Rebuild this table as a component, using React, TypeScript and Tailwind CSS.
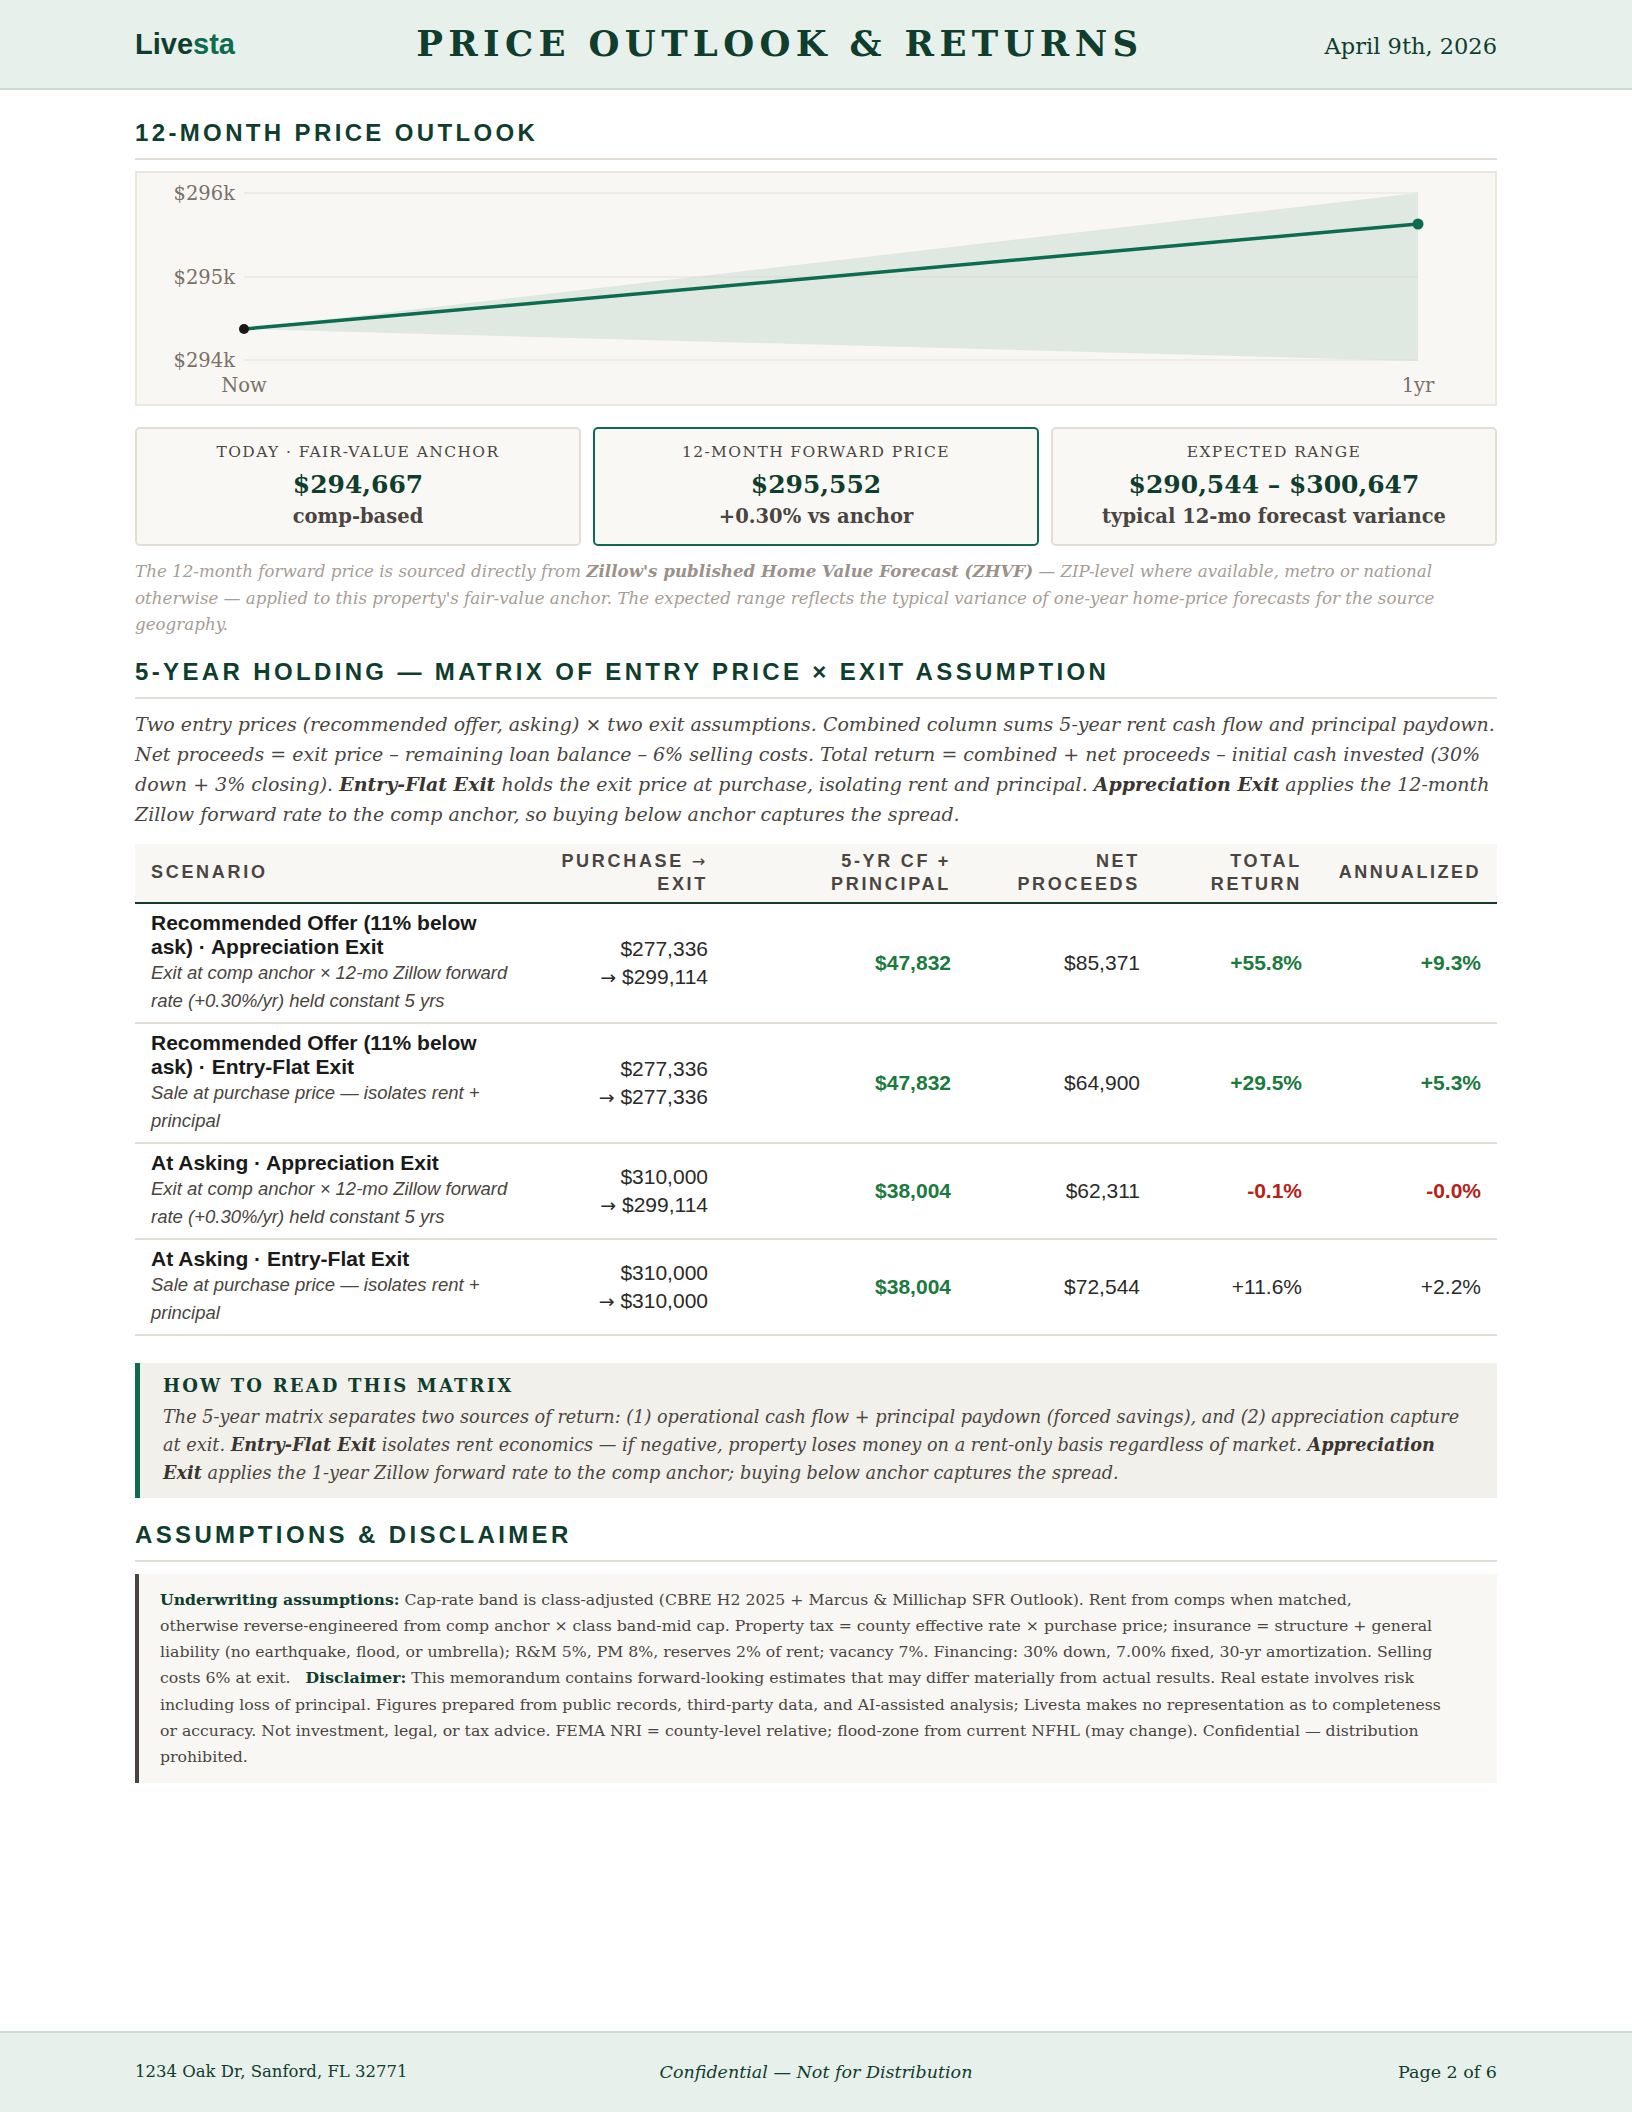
import React from "react";

const serif = "font-['DejaVu_Serif',serif]";
const sans = "font-['Liberation_Sans',Arial,sans-serif]";

type Row = {
  title: string;
  sub: string;
  buy: string;
  exit: string;
  cf: string;
  net: string;
  total: string;
  ann: string;
  tone: "green" | "red" | "plain";
};

const rows: Row[] = [
  {
    title: "Recommended Offer (11% below ask) · Appreciation Exit",
    sub: "Exit at comp anchor × 12-mo Zillow forward rate (+0.30%/yr) held constant 5 yrs",
    buy: "$277,336",
    exit: "$299,114",
    cf: "$47,832",
    net: "$85,371",
    total: "+55.8%",
    ann: "+9.3%",
    tone: "green",
  },
  {
    title: "Recommended Offer (11% below ask) · Entry-Flat Exit",
    sub: "Sale at purchase price — isolates rent + principal",
    buy: "$277,336",
    exit: "$277,336",
    cf: "$47,832",
    net: "$64,900",
    total: "+29.5%",
    ann: "+5.3%",
    tone: "green",
  },
  {
    title: "At Asking · Appreciation Exit",
    sub: "Exit at comp anchor × 12-mo Zillow forward rate (+0.30%/yr) held constant 5 yrs",
    buy: "$310,000",
    exit: "$299,114",
    cf: "$38,004",
    net: "$62,311",
    total: "-0.1%",
    ann: "-0.0%",
    tone: "red",
  },
  {
    title: "At Asking · Entry-Flat Exit",
    sub: "Sale at purchase price — isolates rent + principal",
    buy: "$310,000",
    exit: "$310,000",
    cf: "$38,004",
    net: "$72,544",
    total: "+11.6%",
    ann: "+2.2%",
    tone: "plain",
  },
];

function toneClass(t: Row["tone"]) {
  if (t === "green") return "font-bold text-[#1b7a3d]";
  if (t === "red") return "font-bold text-[#b42318]";
  return "text-[#2a2a2a]";
}

function Arrow() {
  return <span className="font-['DejaVu_Sans',sans-serif] font-normal text-[0.9em]">→</span>;
}

function SectionHeading({ children }: { children: React.ReactNode }) {
  return (
    <div className="border-b-2 border-[#e2ded5] pb-[11px]">
      <h2 className={`${sans} text-[24px] leading-[28px] font-bold tracking-[0.14em] text-[#0f3d2e]`}>
        {children}
      </h2>
    </div>
  );
}

function Chart() {
  const W = 1358;
  const H = 231;
  const x0 = 107;
  const x1 = 1281;
  const g = [20, 104, 187];
  return (
    <div className="border-2 border-[#ece8e0] bg-[#f8f7f3]">
      <svg width={W} height={H} viewBox={`0 0 ${W} ${H}`} className="block">
        <polygon points={`${x0},156 ${x1},20 ${x1},188`} fill="#dfe9e1" />
        {g.map((y) => (
          <line key={y} x1={x0} x2={x1} y1={y} y2={y} stroke="#d9d6cc" strokeOpacity="0.45" strokeWidth="1.5" />
        ))}
        <g fontFamily="'DejaVu Serif', serif" fontSize="19.5" fill="#7b7168">
          <text x="98" y={g[0] + 7} textAnchor="end">$296k</text>
          <text x="98" y={g[1] + 7} textAnchor="end">$295k</text>
          <text x="98" y={g[2] + 7} textAnchor="end">$294k</text>
          <text x={x0} y="219" textAnchor="middle">Now</text>
          <text x={x1} y="219" textAnchor="middle">1yr</text>
        </g>
        <line x1={x0} y1={156} x2={x1} y2={51} stroke="#0d6b4f" strokeWidth="3.5" />
        <circle cx={x0} cy={156} r="5" fill="#1a1614" />
        <circle cx={x1} cy={51} r="5.5" fill="#0d6b4f" />
      </svg>
    </div>
  );
}

function Card({
  label,
  value,
  sub,
  accent,
}: {
  label: string;
  value: string;
  sub: string;
  accent?: boolean;
}) {
  return (
    <div
      className={`h-[119px] rounded-[5px] border-2 ${
        accent ? "border-[#0d6b4f]" : "border-[#e2ded6]"
      } bg-[#f9f8f5] pt-[12px] flex flex-col items-center ${serif}`}
    >
      <div className="text-[15.5px] leading-[22px] tracking-[0.09em] text-[#4a4540]">{label}</div>
      <div className="mt-[6px] text-[25px] leading-[32px] font-bold text-[#0f3d2e]">{value}</div>
      <div className="mt-[3px] text-[19.5px] leading-[26px] font-bold text-[#4a4540]">{sub}</div>
    </div>
  );
}

export default function App() {
  return (
    <div className="min-h-[2112px] w-[1632px] bg-white flex flex-col">
      <header className="h-[90px] shrink-0 bg-[#e8f0eb] border-b-2 border-[#cddcd3] px-[135px] flex items-center justify-between">
        <div className={`${sans} text-[29px] font-bold leading-none`}>
          <span className="text-[#0f3d2e]">Live</span>
          <span className="text-[#0d6b4f]">sta</span>
        </div>
        <div className={`${serif} text-[35.5px] font-bold tracking-[0.15em] text-[#0f3d2e] leading-none`}>
          PRICE OUTLOOK &amp; RETURNS
        </div>
        <div className={`${serif} text-[22.5px] text-[#0f3d2e] leading-none pt-[4px]`}>April 9th, 2026</div>
      </header>

      <main className="px-[135px] pt-[29px] flex flex-col">
        <SectionHeading>12-MONTH PRICE OUTLOOK</SectionHeading>
        <div className="mt-[11px]">
          <Chart />
        </div>

        <div className="mt-[21px] grid grid-cols-3 gap-[12px]">
          <Card label="TODAY · FAIR-VALUE ANCHOR" value="$294,667" sub="comp-based" />
          <Card label="12-MONTH FORWARD PRICE" value="$295,552" sub="+0.30% vs anchor" accent />
          <Card label="EXPECTED RANGE" value="$290,544 – $300,647" sub="typical 12-mo forecast variance" />
        </div>

        <p className={`${serif} mt-[12px] italic text-[16.7px] leading-[26.5px] text-[#a69d95]`}>
          The 12-month forward price is sourced directly from{" "}
          <b className="text-[#9a918a]">Zillow's published Home Value Forecast (ZHVF)</b> — ZIP-level where
          available, metro or national otherwise — applied to this property's fair-value anchor. The expected range
          reflects the typical variance of one-year home-price forecasts for the source geography.
        </p>

        <div className="mt-[20px]">
          <SectionHeading>5-YEAR HOLDING — MATRIX OF ENTRY PRICE × EXIT ASSUMPTION</SectionHeading>
        </div>
        <p className={`${serif} mt-[10px] italic text-[19px] leading-[30px] text-[#4a4540]`}>
          Two entry prices (recommended offer, asking) × two exit assumptions. Combined column sums 5-year rent cash
          flow and principal paydown. Net proceeds = exit price – remaining loan balance – 6% selling costs. Total
          return = combined + net proceeds – initial cash invested (30% down + 3% closing).{" "}
          <b className="text-[#3a3530]">Entry-Flat Exit</b> holds the exit price at purchase, isolating rent and
          principal. <b className="text-[#3a3530]">Appreciation Exit</b> applies the 12-month Zillow forward rate to
          the comp anchor, so buying below anchor captures the spread.
        </p>

        <div className={`${sans} mt-[15px]`}>
          <div className="grid grid-cols-[400px_189px_243px_189px_162px_179px] bg-[#f8f7f3] border-b-2 border-[#143d2f] h-[60px] items-center text-[18px] leading-[23px] font-bold tracking-[0.15em] text-[#4a4540]">
            <div className="px-[16px]">SCENARIO</div>
            <div className="px-[16px] text-right">
              PURCHASE <Arrow /> EXIT
            </div>
            <div className="px-[16px] text-right">5-YR CF + PRINCIPAL</div>
            <div className="px-[16px] text-right">NET PROCEEDS</div>
            <div className="px-[16px] text-right">TOTAL RETURN</div>
            <div className="pl-[12px] pr-[16px] text-right tracking-[0.14em]">ANNUALIZED</div>
          </div>
          {rows.map((r, i) => (
            <div
              key={i}
              className="grid grid-cols-[400px_189px_243px_189px_162px_179px] border-b-2 border-[#e2ded5] py-[7px] text-[21px] text-[#2a2a2a]"
            >
              <div className="px-[16px]">
                <div className="font-bold leading-[24px] text-[#1a1a1a]">{r.title}</div>
                <div className="italic text-[18.5px] leading-[28px] text-[#4a4540]">{r.sub}</div>
              </div>
              <div className="px-[16px] text-right self-center leading-[28px]">
                <div>{r.buy}</div>
                <div className="whitespace-nowrap">
                  <Arrow /> {r.exit}
                </div>
              </div>
              <div className="px-[16px] text-right self-center font-bold text-[#1b7a3d]">{r.cf}</div>
              <div className="px-[16px] text-right self-center">{r.net}</div>
              <div className={`px-[16px] text-right self-center ${toneClass(r.tone)}`}>{r.total}</div>
              <div className={`px-[16px] text-right self-center ${toneClass(r.tone)}`}>{r.ann}</div>
            </div>
          ))}
        </div>

        <div className={`${serif} mt-[27px] border-l-[5px] border-[#0d6b4f] bg-[#f1f0eb] pl-[23px] pr-[24px] pt-[12px] pb-[11px]`}>
          <div className="text-[18px] leading-[22px] font-bold tracking-[0.12em] text-[#0f3d2e]">
            HOW TO READ THIS MATRIX
          </div>
          <p className="mt-[6px] italic text-[17.7px] leading-[28px] text-[#4a4540]">
            The 5-year matrix separates two sources of return: (1) operational cash flow + principal paydown (forced
            savings), and (2) appreciation capture at exit. <b className="text-[#3a3530]">Entry-Flat Exit</b>{" "}
            isolates rent economics — if negative, property loses money on a rent-only basis regardless of market.{" "}
            <b className="text-[#3a3530]">Appreciation Exit</b> applies the 1-year Zillow forward rate to the comp
            anchor; buying below anchor captures the spread.
          </p>
        </div>

        <div className="mt-[23px]">
          <SectionHeading>ASSUMPTIONS &amp; DISCLAIMER</SectionHeading>
        </div>

        <div className={`${serif} mt-[12px] border-l-[4px] border-[#4a4540] bg-[#f8f7f3] pl-[21px] pr-[2px] pt-[13px] pb-[12px] text-[15.7px] leading-[26.3px] text-[#4a4540]`}>
          <b className="text-[#0f3d2e]">Underwriting assumptions:</b> Cap-rate band is class-adjusted (CBRE H2 2025 +
          Marcus &amp; Millichap SFR Outlook). Rent from comps when matched,
          <br />
          otherwise reverse-engineered from comp anchor × class band-mid cap. Property tax = county effective rate ×
          purchase price; insurance = structure + general
          <br />
          liability (no earthquake, flood, or umbrella); R&amp;M 5%, PM 8%, reserves 2% of rent; vacancy 7%.
          Financing: 30% down, 7.00% fixed, 30-yr amortization. Selling
          <br />
          costs 6% at exit.{"\u00a0\u00a0\u00a0"}
          <b className="text-[#0f3d2e]">Disclaimer:</b> This memorandum contains forward-looking estimates that may
          differ materially from actual results. Real estate involves risk
          <br />
          including loss of principal. Figures prepared from public records, third-party data, and AI-assisted
          analysis; Livesta makes no representation as to completeness
          <br />
          or accuracy. Not investment, legal, or tax advice. FEMA NRI = county-level relative; flood-zone from current
          NFHL (may change). Confidential — distribution
          <br />
          prohibited.
        </div>
      </main>

      <footer
        className={`${serif} mt-auto h-[81px] shrink-0 bg-[#e8f0eb] border-t-2 border-[#cddcd3] px-[135px] grid grid-cols-3 items-center text-[17.5px] text-[#0f3d2e]`}
      >
        <div className="text-[16.5px]">1234 Oak Dr, Sanford, FL 32771</div>
        <div className="italic text-center">Confidential — Not for Distribution</div>
        <div className="text-right">Page 2 of 6</div>
      </footer>
    </div>
  );
}
